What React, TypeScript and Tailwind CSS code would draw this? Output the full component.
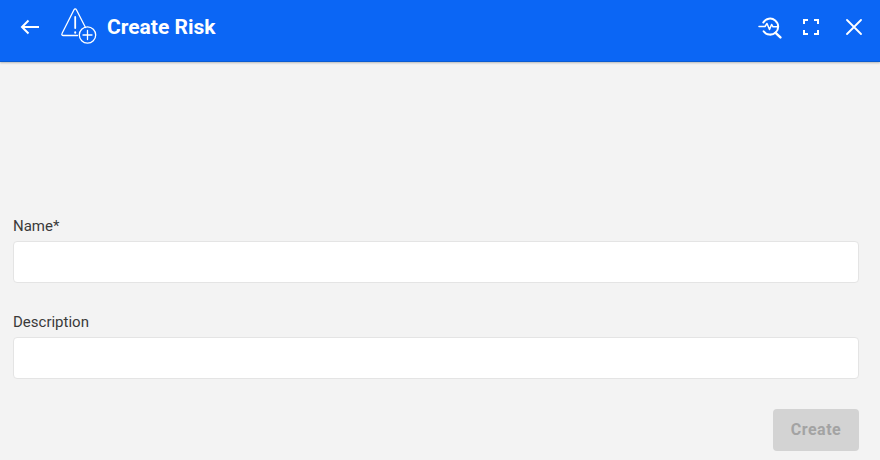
import React from 'react';

const Field = ({ label, className }: { label: string; className?: string }) => (
  <div className={className}>
    <label className="block text-[15px] leading-[20px] text-[#3a3a3a]">{label}</label>
    <input
      type="text"
      className="mt-[5px] block h-[42px] w-full rounded-[4px] border border-[#e4e4e4] bg-white outline-none"
    />
  </div>
);

const RiskIcon = () => (
  <svg width="38" height="38" viewBox="0 0 38 38" fill="none" stroke="white" strokeWidth="1.3" strokeLinecap="round" strokeLinejoin="round">
    <path d="M17.5 28.5H3.2C2 28.5 1.5 27.4 2 26.5L14 2.7C14.6 1.6 15.8 1.6 16.4 2.7L25.5 20.5" />
    <path d="M15.2 10V21" strokeWidth="1.8" />
    <path d="M15.2 25.2V25.7" strokeWidth="2" />
    <circle cx="27.5" cy="28" r="8.2" />
    <path d="M27.5 23.5V32.5M23 28H32" />
  </svg>
);

const PulseSearchIcon = () => (
  <svg width="24" height="24" viewBox="0 0 24 24" fill="none" stroke="white" strokeWidth="2" strokeLinecap="round" strokeLinejoin="round">
    <path d="M5.3 7.5A8 8 0 1 1 5.6 16.2" />
    <path d="M17.6 17.8L22.4 22.4" strokeWidth="2.4" />
    <path d="M1 11.5H7L9 8.5L11.5 14.5L13.6 9.5L15 11.8H20" strokeWidth="1.5" />
  </svg>
);

const ExpandIcon = () => (
  <svg width="16" height="16" viewBox="0 0 16 16" fill="none" stroke="white" strokeWidth="2">
    <path d="M1 5V1H5M11 1H15V5M15 11V15H11M5 15H1V11" />
  </svg>
);

const CloseIcon = () => (
  <svg width="16" height="16" viewBox="0 0 16 16" fill="none" stroke="white" strokeWidth="1.8" strokeLinecap="round">
    <path d="M1 1L15 15M15 1L1 15" />
  </svg>
);

const BackArrow = () => (
  <svg width="20" height="16" viewBox="0 0 20 16" fill="none" stroke="white" strokeWidth="2">
    <path d="M19 8H2M8.5 1.5L2 8L8.5 14.5" />
  </svg>
);

export default function App() {
  return (
    <div className="flex h-[460px] w-[880px] flex-col overflow-hidden bg-[#f3f3f3] font-['Roboto',sans-serif]">
      <header className="flex h-[62px] shrink-0 items-center border-b border-[#0a5bd0] bg-[#0b66f5] pb-[8px] pl-[20px] pr-[18px] shadow-[0_1px_2px_rgba(0,0,0,0.25)]">
        <BackArrow />
        <div className="mb-[1px] ml-[20px]">
          <RiskIcon />
        </div>
        <h1 className="ml-[9px] text-[21px] font-bold leading-[24px] text-white">Create Risk</h1>
        <div className="ml-auto flex items-center">
          <PulseSearchIcon />
          <div className="ml-[21px]">
            <ExpandIcon />
          </div>
          <div className="ml-[27px]">
            <CloseIcon />
          </div>
        </div>
      </header>

      <main className="flex flex-1 flex-col px-[13px] pt-[154px] pr-[21px]">
        <Field label="Name*" />
        <Field label="Description" className="mt-[29px]" />
        <div className="mt-[30px] flex justify-end">
          <button
            disabled
            className="h-[42px] w-[86px] rounded-[4px] bg-[#d3d3d3] text-[16px] font-bold tracking-[0.5px] text-[#a3a3a3]"
          >
            Create
          </button>
        </div>
      </main>
    </div>
  );
}
